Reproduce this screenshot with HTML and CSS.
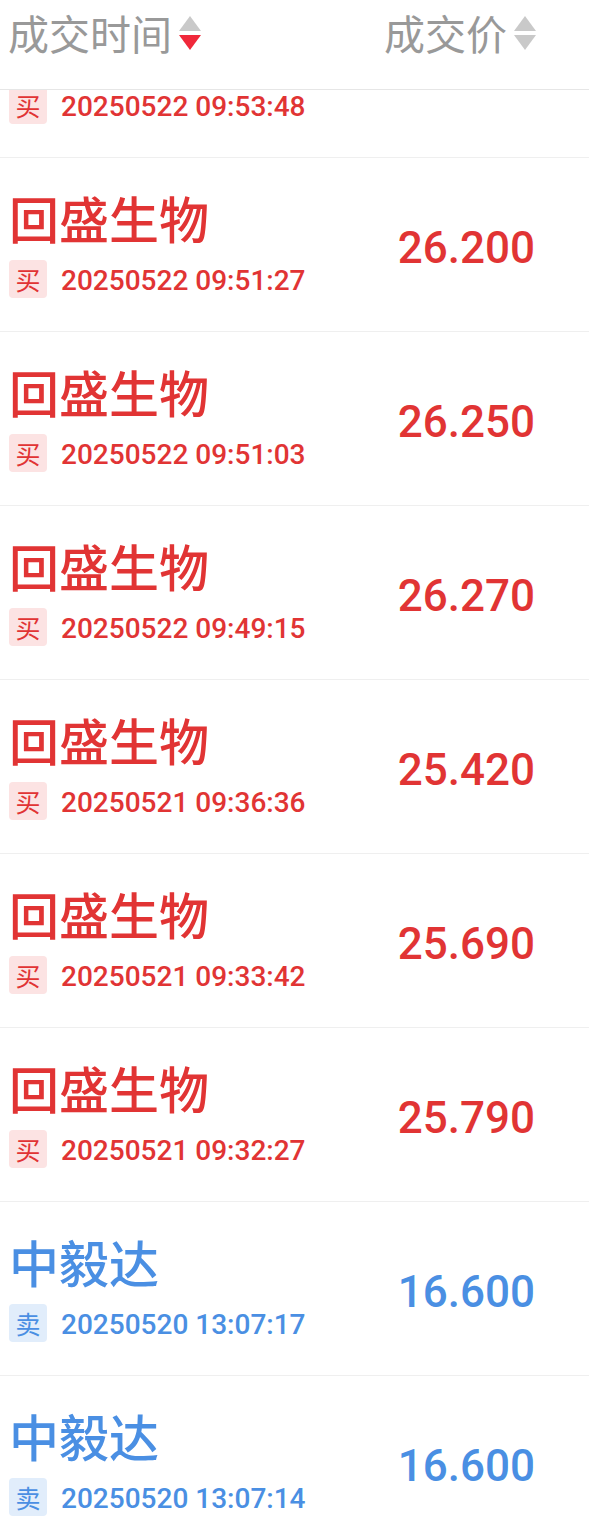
FILE: index.html
```html
<!DOCTYPE html>
<html lang="zh-CN">
<head>
    <meta charset="UTF-8">
    <meta name="viewport" content="width=device-width, initial-scale=1.0">
    <title>成交记录</title>
    <link rel="stylesheet" href="styles.css">
</head>
<body>

    <div class="page">
        <!-- 表头 -->
        <div class="table-head">
            <div class="head-cell">
                <span>成交时间</span>
                <svg class="sort" viewBox="0 0 22 36" width="22" height="36">
                    <polygon points="11,0 22,15 0,15" fill="#c9c9c9"/>
                    <polygon points="0,19 22,19 11,34" fill="#f0283a"/>
                </svg>
            </div>
            <div class="head-cell">
                <span>成交价</span>
                <svg class="sort" viewBox="0 0 22 36" width="22" height="36">
                    <polygon points="11,0 22,15 0,15" fill="#c9c9c9"/>
                    <polygon points="0,19 22,19 11,34" fill="#c9c9c9"/>
                </svg>
            </div>
        </div>

        <!-- 列表（已滚动） -->
        <div class="list-window">
            <div class="list">
                <div class="row buy">
                    <div class="info">
                        <div class="name">回盛生物</div>
                        <div class="meta"><span class="tag">买</span><span class="time">20250522 09:53:48</span></div>
                    </div>
                    <div class="price">26.300</div>
                </div>
                <div class="row buy">
                    <div class="info">
                        <div class="name">回盛生物</div>
                        <div class="meta"><span class="tag">买</span><span class="time">20250522 09:51:27</span></div>
                    </div>
                    <div class="price">26.200</div>
                </div>
                <div class="row buy">
                    <div class="info">
                        <div class="name">回盛生物</div>
                        <div class="meta"><span class="tag">买</span><span class="time">20250522 09:51:03</span></div>
                    </div>
                    <div class="price">26.250</div>
                </div>
                <div class="row buy">
                    <div class="info">
                        <div class="name">回盛生物</div>
                        <div class="meta"><span class="tag">买</span><span class="time">20250522 09:49:15</span></div>
                    </div>
                    <div class="price">26.270</div>
                </div>
                <div class="row buy">
                    <div class="info">
                        <div class="name">回盛生物</div>
                        <div class="meta"><span class="tag">买</span><span class="time">20250521 09:36:36</span></div>
                    </div>
                    <div class="price">25.420</div>
                </div>
                <div class="row buy">
                    <div class="info">
                        <div class="name">回盛生物</div>
                        <div class="meta"><span class="tag">买</span><span class="time">20250521 09:33:42</span></div>
                    </div>
                    <div class="price">25.690</div>
                </div>
                <div class="row buy">
                    <div class="info">
                        <div class="name">回盛生物</div>
                        <div class="meta"><span class="tag">买</span><span class="time">20250521 09:32:27</span></div>
                    </div>
                    <div class="price">25.790</div>
                </div>
                <div class="row sell">
                    <div class="info">
                        <div class="name">中毅达</div>
                        <div class="meta"><span class="tag">卖</span><span class="time">20250520 13:07:17</span></div>
                    </div>
                    <div class="price">16.600</div>
                </div>
                <div class="row sell">
                    <div class="info">
                        <div class="name">中毅达</div>
                        <div class="meta"><span class="tag">卖</span><span class="time">20250520 13:07:14</span></div>
                    </div>
                    <div class="price">16.600</div>
                </div>
            </div>
        </div>
    </div>

</body>
</html>
```

FILE: styles.css
```css
body {
    margin: 0;
    background-color: #ffffff;
    font-family: Roboto, "Noto Sans CJK SC", sans-serif;
}

.page {
    height: 1519px;
    display: flex;
    flex-direction: column;
    overflow: hidden;
}

.table-head {
    display: flex;
    justify-content: space-between;
    align-items: flex-start;
    height: 90px;
    box-sizing: border-box;
    padding: 3px 53px 0 8px;
    border-bottom: 1px solid #e6e6e6;
    flex-shrink: 0;
}

.head-cell {
    display: flex;
    align-items: center;
    gap: 7px;
    font-family: "Noto Sans CJK SC", sans-serif;
    font-size: 41px;
    line-height: 58px;
    color: #999999;
}

.sort {
    display: block;
    margin-top: 3px;
}

.list-window {
    flex: 1;
    overflow: hidden;
}

.list {
    margin-top: -106px;
}

.row {
    display: flex;
    justify-content: space-between;
    align-items: center;
    height: 174px;
    box-sizing: border-box;
    padding: 0 54px 0 9px;
    border-bottom: 1px solid #efefef;
}

.info {
    display: flex;
    flex-direction: column;
    align-self: flex-start;
    padding-top: 34px;
}

.name {
    font-family: "Noto Sans CJK SC", sans-serif;
    font-size: 50px;
    font-weight: 500;
    line-height: 50px;
}

.meta {
    display: flex;
    align-items: flex-start;
    gap: 14px;
    margin-top: 18px;
}

.tag {
    display: flex;
    align-items: center;
    justify-content: center;
    width: 38px;
    height: 38px;
    border-radius: 4px;
    font-family: "Noto Sans CJK SC", sans-serif;
    font-size: 25px;
}

.time {
    font-size: 28px;
    font-weight: 500;
    line-height: 38px;
    padding-top: 2px;
}

.price {
    font-size: 44px;
    font-weight: 500;
    padding-top: 7px;
}

.buy .name, .buy .time, .buy .price {
    color: #e13434;
}

.buy .tag {
    background-color: #fce3e3;
    color: #e13434;
}

.sell .name, .sell .time, .sell .price {
    color: #4a8fe3;
}

.sell .tag {
    background-color: #e1edfb;
    color: #4a8fe3;
}
```
